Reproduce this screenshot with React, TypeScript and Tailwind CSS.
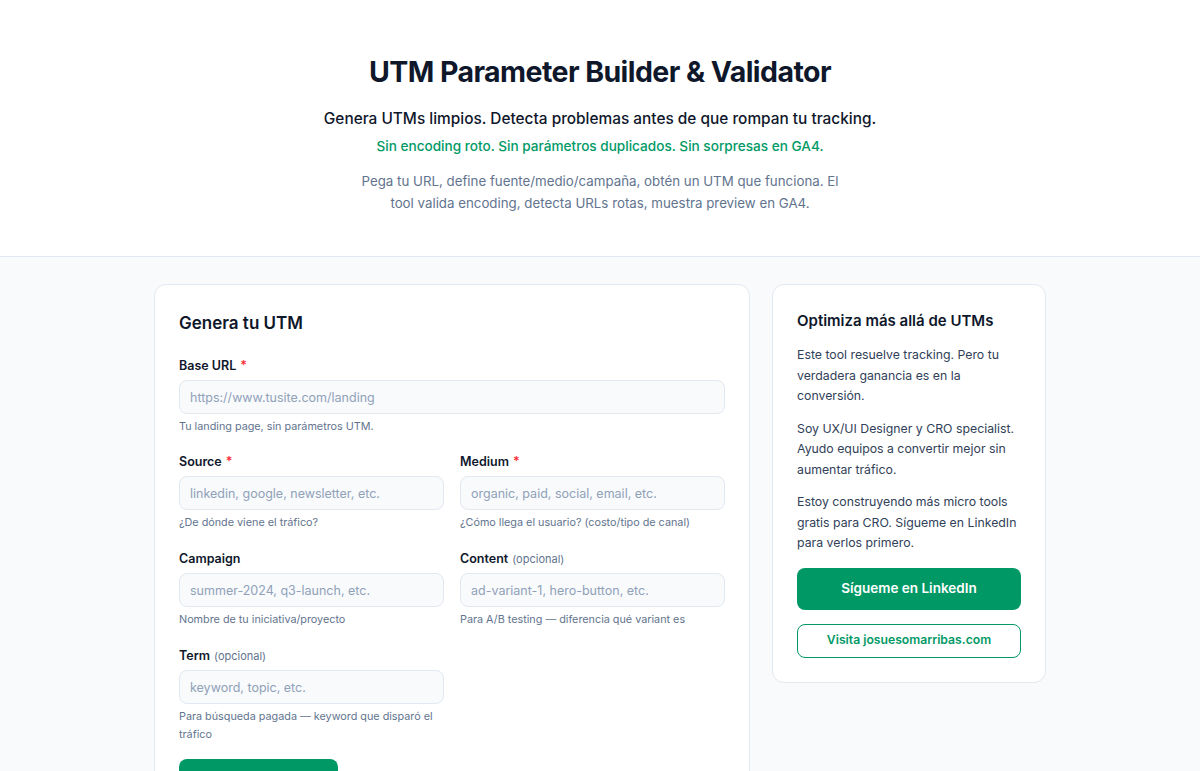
import { useState } from 'react'

type FieldProps = {
  label: string
  required?: boolean
  optional?: boolean
  placeholder: string
  help: string
}

function Field({ label, required, optional, placeholder, help }: FieldProps) {
  const [value, setValue] = useState('')
  return (
    <div>
      <label className="mb-[4px] block text-[12.5px] font-semibold leading-5 text-slate-900">
        {label}
        {required && <span className="ml-1 text-red-500">*</span>}
        {optional && <span className="ml-1 text-[11px] font-normal text-slate-500">(opcional)</span>}
      </label>
      <input
        type="text"
        value={value}
        onChange={(e) => setValue(e.target.value)}
        placeholder={placeholder}
        className="h-[34px] w-full rounded-lg border border-slate-200 bg-slate-50 px-[10px] text-[12.5px] text-slate-900 placeholder:text-slate-400 focus:outline-none focus:ring-2 focus:ring-emerald-500"
      />
      <p className="mt-[4px] text-[10.8px] leading-[18px] text-slate-500">{help}</p>
    </div>
  )
}

export default function App() {
  return (
    <div className="min-h-screen bg-slate-50 font-['Inter',sans-serif] text-slate-900">
      <header className="border-b border-slate-200 bg-white px-6 pb-[42px] pt-[52px] text-center">
        <h1 className="text-[28.5px] font-bold leading-10 tracking-[-0.02em] text-slate-900">
          UTM Parameter Builder &amp; Validator
        </h1>
        <p className="mt-[15px] text-[15.4px] font-medium leading-6 text-slate-900">
          Genera UTMs limpios. Detecta problemas antes de que rompan tu tracking.
        </p>
        <p className="mt-[3px] text-[13.6px] font-medium leading-6 text-emerald-600">
          Sin encoding roto. Sin parámetros duplicados. Sin sorpresas en GA4.
        </p>
        <p className="mx-auto mt-[12px] max-w-[480px] text-[13.3px] leading-[22px] text-slate-500">
          Pega tu URL, define fuente/medio/campaña, obtén un UTM que funciona. El tool valida encoding, detecta URLs rotas, muestra preview en GA4.
        </p>
      </header>

      <main className="mx-auto flex w-[892px] items-start gap-[22px] pt-[27px] pb-10">
        <section className="w-[596px] shrink-0 rounded-xl border border-slate-200 bg-white p-6">
          <h2 className="mb-[19px] text-[17px] font-semibold leading-7 text-slate-900">Genera tu UTM</h2>
          <div className="flex flex-col gap-[16px]">
            <Field label="Base URL" required placeholder="https://www.tusite.com/landing" help="Tu landing page, sin parámetros UTM." />
            <div className="grid grid-cols-2 gap-x-4 gap-y-[17px]">
              <Field label="Source" required placeholder="linkedin, google, newsletter, etc." help="¿De dónde viene el tráfico?" />
              <Field label="Medium" required placeholder="organic, paid, social, email, etc." help="¿Cómo llega el usuario? (costo/tipo de canal)" />
              <Field label="Campaign" placeholder="summer-2024, q3-launch, etc." help="Nombre de tu iniciativa/proyecto" />
              <Field label="Content" optional placeholder="ad-variant-1, hero-button, etc." help="Para A/B testing — diferencia qué variant es" />
              <Field label="Term" optional placeholder="keyword, topic, etc." help="Para búsqueda pagada — keyword que disparó el tráfico" />
            </div>
          </div>
          <button className="mt-[15px] h-[42px] w-[159px] rounded-lg bg-emerald-600 text-[14px] font-semibold text-white">
            Generar UTM
          </button>
        </section>

        <aside className="w-[274px] shrink-0 rounded-xl border border-slate-200 bg-white px-6 pb-6 pt-6">
          <h3 className="text-[15px] font-semibold leading-6 text-slate-900">Optimiza más allá de UTMs</h3>
          <div className="mt-[12px] space-y-3 text-[12.3px] leading-[20.5px] text-slate-700">
            <p>Este tool resuelve tracking. Pero tu verdadera ganancia es en la conversión.</p>
            <p>Soy UX/UI Designer y CRO specialist. Ayudo equipos a convertir mejor sin aumentar tráfico.</p>
            <p>Estoy construyendo más micro tools gratis para CRO. Sígueme en LinkedIn para verlos primero.</p>
          </div>
          <div className="mt-[14px] flex flex-col gap-[14px]">
            <a href="#" className="flex h-[42px] items-center justify-center rounded-lg bg-emerald-600 text-[13.5px] font-semibold text-white">
              Sígueme en LinkedIn
            </a>
            <a href="#" className="flex h-[34px] items-center justify-center rounded-lg border border-emerald-600 bg-white text-[12.2px] font-semibold text-emerald-600">
              Visita josuesomarribas.com
            </a>
          </div>
        </aside>
      </main>
    </div>
  )
}
